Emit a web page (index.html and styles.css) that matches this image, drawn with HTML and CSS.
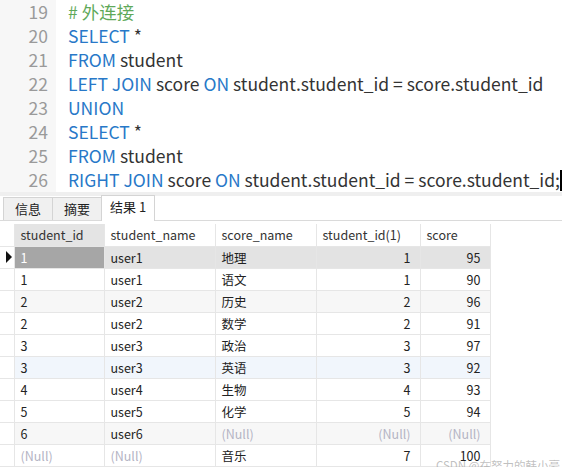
FILE: index.html
```html
<!DOCTYPE html>
<html lang="zh-CN">
<head>
  <meta charset="UTF-8">
  <title>外连接</title>
  <link rel="stylesheet" href="styles.css">
</head>
<body>
  <div class="editor">
    <div class="gutter">
      <div>19</div><div>20</div><div>21</div><div>22</div>
      <div>23</div><div>24</div><div>25</div><div>26</div>
    </div>
    <div class="code">
      <div class="comment"># 外连接</div>
      <div><span class="kw">SELECT</span> *</div>
      <div><span class="kw">FROM</span> student</div>
      <div><span class="kw">LEFT JOIN</span> score <span class="kw">ON</span> student.student_id = score.student_id</div>
      <div><span class="kw">UNION</span></div>
      <div><span class="kw">SELECT</span> *</div>
      <div><span class="kw">FROM</span> student</div>
      <div><span class="kw">RIGHT JOIN</span> score <span class="kw">ON</span> student.student_id = score.student_id;<span class="caret"></span></div>
    </div>
  </div>

  <div class="splitter"></div>

  <div class="tabs">
    <div class="tab">信息</div>
    <div class="tab">摘要</div>
    <div class="tab active">结果 1</div>
  </div>

  <div class="grid-wrap">
    <table class="grid">
      <thead>
        <tr>
          <th class="ind"></th>
          <th class="c1 sel">student_id</th>
          <th class="c2">student_name</th>
          <th class="c3">score_name</th>
          <th class="c4">student_id(1)</th>
          <th class="c5">score</th>
        </tr>
      </thead>
      <tbody>
        <tr class="current">
          <td class="ind"><span class="arrow"></span></td>
          <td class="focus">1</td><td>user1</td><td>地理</td><td class="num">1</td><td class="num">95</td>
        </tr>
        <tr>
          <td class="ind"></td><td>1</td><td>user1</td><td>语文</td><td class="num">1</td><td class="num">90</td>
        </tr>
        <tr class="alt">
          <td class="ind"></td><td>2</td><td>user2</td><td>历史</td><td class="num">2</td><td class="num">96</td>
        </tr>
        <tr>
          <td class="ind"></td><td>2</td><td>user2</td><td>数学</td><td class="num">2</td><td class="num">91</td>
        </tr>
        <tr>
          <td class="ind"></td><td>3</td><td>user3</td><td>政治</td><td class="num">3</td><td class="num">97</td>
        </tr>
        <tr class="hover">
          <td class="ind"></td><td>3</td><td>user3</td><td>英语</td><td class="num">3</td><td class="num">92</td>
        </tr>
        <tr>
          <td class="ind"></td><td>4</td><td>user4</td><td>生物</td><td class="num">4</td><td class="num">93</td>
        </tr>
        <tr>
          <td class="ind"></td><td>5</td><td>user5</td><td>化学</td><td class="num">5</td><td class="num">94</td>
        </tr>
        <tr class="alt">
          <td class="ind"></td><td>6</td><td>user6</td><td class="null">(Null)</td><td class="num null">(Null)</td><td class="num null">(Null)</td>
        </tr>
        <tr>
          <td class="ind"></td><td class="null">(Null)</td><td class="null">(Null)</td><td>音乐</td><td class="num">7</td><td class="num">100</td>
        </tr>
      </tbody>
    </table>
    <div class="watermark">CSDN @在努力的韩小豪</div>
  </div>
</body>
</html>
```

FILE: styles.css
```css
:root {
  --kw-color: #2878c8;
  --comment-color: #5fa95a;
  --grid-line: #e6e6e6;
  --null-color: #b4b4c4;
}

body {
  margin: 0;
  background: #fff;
  font-family: "Noto Sans CJK SC", "Noto Sans", sans-serif;
  color: #222;
  overflow: hidden;
}

/* editor */
.editor {
  display: flex;
  height: 192px;
  font-size: 17.5px;
  line-height: 24px;
  overflow: hidden;
}

.gutter {
  flex-shrink: 0;
  width: 56px;
  background: #f7f7f7;
  color: #9a9a9a;
  text-align: right;
  padding-right: 8px;
  box-sizing: border-box;
}

.code {
  padding-left: 12px;
  white-space: nowrap;
  color: #333;
}

.kw {
  color: var(--kw-color);
}

.comment {
  color: var(--comment-color);
}

.caret {
  display: inline-block;
  width: 2px;
  height: 21px;
  background: #000;
  vertical-align: -4px;
}

.splitter {
  height: 4px;
  background: #efefef;
}

/* tabs */
.tabs {
  display: flex;
  align-items: flex-end;
  height: 24px;
  padding-left: 3px;
  border-bottom: 1px solid #dadada;
  font-size: 13px;
}

.tab {
  height: 22px;
  line-height: 22px;
  padding: 0 11px;
  background: #f0f0f0;
  border: 1px solid #d4d4d4;
  border-bottom: none;
  margin-right: -1px;
}

.tab.active {
  height: 25px;
  line-height: 22px;
  padding: 0 8px;
  background: #fff;
  margin-bottom: -1px;
}

/* result grid */
.grid-wrap {
  position: relative;
  padding-top: 3px;
}

.grid {
  border-collapse: collapse;
  font-size: 12.5px;
  table-layout: fixed;
}

.grid th,
.grid td {
  height: 22px;
  padding: 0 6px;
  border: 1px solid var(--grid-line);
  border-top: none;
  text-align: left;
  font-weight: normal;
  white-space: nowrap;
  box-sizing: border-box;
}

.grid th {
  color: #333;
}

.grid th.sel {
  background: #e4e4e4;
}

.grid .ind {
  width: 14px;
  padding: 0;
  border-left: none;
  background: #fff;
}

.c1 { width: 90px; }
.c2 { width: 111px; }
.c3 { width: 101px; }
.c4 { width: 104px; }
.c5 { width: 70px; }

.grid td.num {
  text-align: right;
  padding-right: 9px;
}

.grid td.null {
  color: var(--null-color);
}

.grid tr.alt td {
  background: #f7f7f7;
}

.grid tr.hover td {
  background: #f1f6fc;
}

.grid tr.current td {
  background: #e3e3e3;
}

.grid tr.current td.focus {
  background: #a6a6a6;
  color: #fff;
}

.grid tr td.ind {
  background: #fff;
}

.arrow {
  display: block;
  width: 0;
  height: 0;
  margin-left: 6px;
  border-top: 6px solid transparent;
  border-bottom: 6px solid transparent;
  border-left: 6px solid #111;
}

.watermark {
  position: absolute;
  right: 2px;
  bottom: -6px;
  font-size: 11.5px;
  color: rgba(150, 150, 150, 0.6);
}
```
